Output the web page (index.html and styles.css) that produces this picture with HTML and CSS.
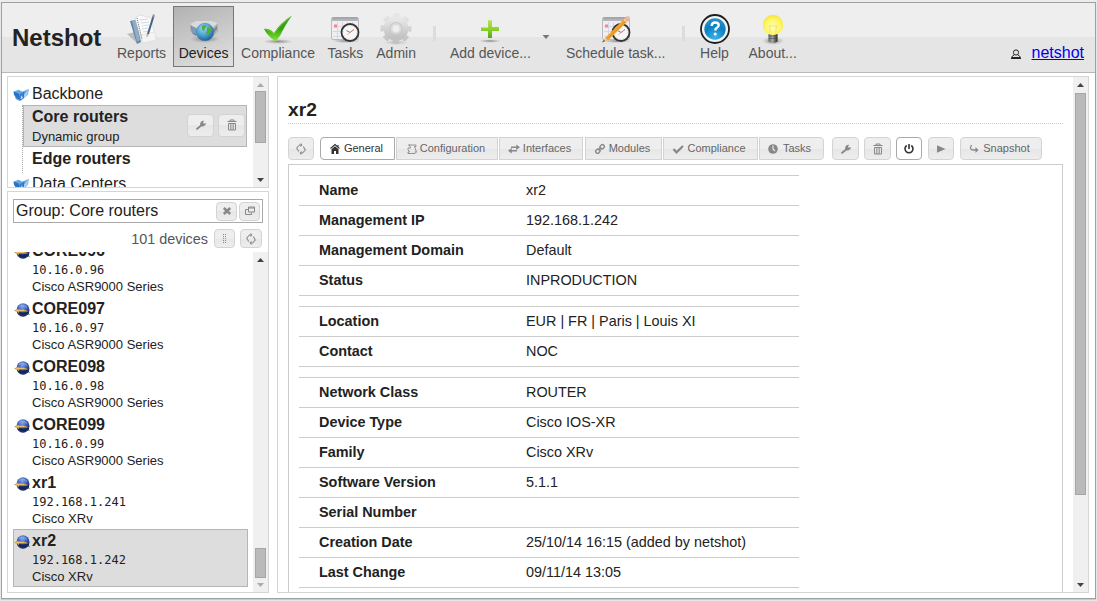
FILE: index.html
```html
<!DOCTYPE html>
<html lang="en">
<head>
<meta charset="utf-8">
<title>Netshot</title>
<link rel="stylesheet" href="styles.css">
</head>
<body>
<svg class="defs" aria-hidden="true">
  <defs>
    <linearGradient id="green" x1="0" y1="0" x2="0" y2="1"><stop offset="0" stop-color="#43b414"/><stop offset=".5" stop-color="#32a007"/><stop offset="1" stop-color="#8be83b"/></linearGradient>
    <linearGradient id="plus" x1="0" y1="0" x2="0" y2="1"><stop offset="0" stop-color="#b5e650"/><stop offset=".5" stop-color="#8fd32b"/><stop offset="1" stop-color="#54a80d"/></linearGradient>
    <linearGradient id="gear" x1="0" y1="0" x2="0" y2="1"><stop offset="0" stop-color="#e6e6e6"/><stop offset="1" stop-color="#c2c2c2"/></linearGradient>
    <radialGradient id="globe" cx=".4" cy=".3" r=".75"><stop offset="0" stop-color="#9bd8f5"/><stop offset=".55" stop-color="#459fd4"/><stop offset="1" stop-color="#17578f"/></radialGradient>
    <radialGradient id="help" cx=".5" cy=".9" r=".9"><stop offset="0" stop-color="#37b5ea"/><stop offset=".6" stop-color="#0c80c0"/><stop offset="1" stop-color="#2f8fc9"/></radialGradient>
    <radialGradient id="bulb" cx=".5" cy=".6" r=".6"><stop offset="0" stop-color="#fffbc0"/><stop offset=".6" stop-color="#fff766"/><stop offset="1" stop-color="#f4e63a"/></radialGradient>
    <radialGradient id="shade"><stop offset="0" stop-color="#555" stop-opacity=".65"/><stop offset="1" stop-color="#777" stop-opacity="0"/></radialGradient>
    <radialGradient id="ball" cx=".45" cy=".25" r=".8"><stop offset="0" stop-color="#86a9ec"/><stop offset=".5" stop-color="#3158ae"/><stop offset="1" stop-color="#101f4c"/></radialGradient>
    <linearGradient id="socket"><stop offset="0" stop-color="#666"/><stop offset=".45" stop-color="#aaa"/><stop offset="1" stop-color="#222"/></linearGradient>
    <linearGradient id="fold"><stop offset="0" stop-color="#2a72c4"/><stop offset="1" stop-color="#82bff5"/></linearGradient>

    <symbol id="calendar" viewBox="0 0 32 32">
      <ellipse cx="17" cy="28" rx="14" ry="2" fill="url(#shade)"/>
      <rect x="2.500" y="4.500" width="27" height="22" rx="1.500" fill="#eeeef3" stroke="#b9b9bf"/>
      <rect x="3" y="4" width="26" height="4" rx="1" fill="#b4b4ba"/><path d="M4 5h24" stroke="#96969d"/>
      <path d="M4 13.500h24M4 18.500h24M4 23.500h24M8.500 9v17M13.500 9v17M18.500 9v17M23.500 9v17" stroke="#d6d7e3"/>
      <path d="M5 13h3" stroke="#f28b80" stroke-width="3"/>
      <circle cx="21" cy="19.500" r="8.500" fill="#f7f7f7" stroke="#353535" stroke-width="1.800"/>
      <circle cx="21" cy="19.500" r="6.600" fill="none" stroke="#d4d4d4" stroke-dasharray="1 2.450"/>
      <path d="M17.500 17.500l3.500 2 4-3" fill="none" stroke="#777"/><path d="M18 22l6-5" stroke="#f09a90" stroke-width=".7"/>
    </symbol>
    <symbol id="folder" viewBox="0 0 18 16">
      <path d="M0 5l6-2 4 2 2-1v6l-5 5-4-2z" fill="#65a7e6"/><path d="M1 5l5 2 2 7-4-2-3-4z" fill="#2b71c4"/>
      <path d="M7 8q5-5 10-6l-1 6-8 7z" fill="url(#fold)"/><path d="M11 9l5-6-1 5-4 4z" fill="#a9d3f8"/><path d="M8 13l1-4 1.500 2.500z" fill="#e4f2fd"/><path d="M11 12V6" stroke="#2b6bb5"/>
    </symbol>
    <symbol id="router" viewBox="0 0 16 14">
      <ellipse cx="9" cy="7" rx="6.500" ry="6.700" fill="url(#ball)"/>
      <path d="M5 3.500q4-3 8 1" fill="none" stroke="#8fadea" stroke-width=".8"/><path d="M3 8.500q6 2 12 0v2l-1.500 1q-4 1-8 0z" fill="#15275a"/>
      <path d="M0 7.500L4.500 5.500v1h5q3 .5 4.500 2H5v1.500z" fill="#d99e49"/><path d="M2 7.500h8" stroke="#efc774" stroke-width=".8"/><path d="M14 10.500l1.500 1.500" stroke="#555"/>
    </symbol>
    <symbol id="wrench" viewBox="0 0 12 12"><path d="M1 9.500l4-3.300Q5 3.500 6.500 2.300q1.300-1 2.800-.5L8 3.500l.7 1.200 2.300-.6q0 2.700-2.500 3.200-1 .2-1.800-.1L2.500 10.800Q1 11 1 9.500z" fill="currentColor"/></symbol>
    <symbol id="trash" viewBox="0 0 12 12"><path d="M4 2V1h4v1M1.500 2.500h9" fill="none" stroke="currentColor"/><path d="M2.500 4.500h7V11h-7z" fill="none" stroke="currentColor"/><path d="M4.500 5v6M6 5v6M7.500 5v6" stroke="currentColor" stroke-width=".7"/></symbol>
    <symbol id="refresh" viewBox="0 0 12 12"><path d="M7 2H4.500L1.700 5l2 3.500M7 2L5.500.5M7 2L5.500 3.500M5 10h2.500l2.800-3-2-3.500M5 10l1.500-1.500M5 10l1.500 1.500" fill="none" stroke="currentColor" stroke-width="1.050"/></symbol>
    <symbol id="home" viewBox="0 0 12 12"><path d="M1.500 5.500L6 1.500l4.500 4M9 2v2" fill="none" stroke="currentColor" stroke-width="1.100"/><path d="M2.500 6.300L6 3.300l3.500 3V11H7V8H5v3H2.500z" fill="currentColor"/></symbol>
    <symbol id="script" viewBox="0 0 12 12"><path d="M3.500 2H10v1.500H8.500l2 5.500L9 10.500H2V9h1.500L2 6.500V5h2.500zM2 2h2M8.500 9H10" fill="none" stroke="currentColor" stroke-width=".9"/></symbol>
    <symbol id="swap" viewBox="0 0 12 12"><path d="M3 4.200h6M3 7.800h6" stroke="currentColor" stroke-width="1.500"/><path d="M8.300 1.500L12 4.200 8.300 7zM3.700 5L0 7.800l3.700 2.700z" fill="currentColor"/></symbol>
    <symbol id="link" viewBox="0 0 12 12"><g transform="rotate(-45 6 6)" fill="none" stroke="currentColor" stroke-width="1.400"><rect x="0.700" y="4.200" width="4.500" height="3.600" rx="1.600"/><rect x="6.800" y="4.200" width="4.500" height="3.600" rx="1.600"/><path d="M4 6h4"/></g></symbol>
    <symbol id="check" viewBox="0 0 12 12"><path d="M1.500 6l3 3.300L11 3" fill="none" stroke="currentColor" stroke-width="2.200"/></symbol>
    <symbol id="clock" viewBox="0 0 12 12"><circle cx="6" cy="6" r="4.800" fill="currentColor"/><path d="M6 2.500V6l2 2" fill="none" stroke="#eee" stroke-width="1.100"/></symbol>
    <symbol id="power" viewBox="0 0 12 12"><path d="M3.700 2.500a4 4 0 1 0 4.600 0M6 1v5" fill="none" stroke="currentColor" stroke-width="1.600"/></symbol>
    <symbol id="play" viewBox="0 0 12 12"><path d="M2 2.200l8.500 3.800L2 9.800z" fill="currentColor"/></symbol>
    <symbol id="turn" viewBox="0 0 12 12"><path d="M3.500 2Q.8 6.500 5 7h3" fill="none" stroke="currentColor" stroke-width="1.300"/><path d="M7.500 4l3 3-3 3z" fill="currentColor"/></symbol>
    <symbol id="close" viewBox="0 0 12 12"><path d="M2.800 3l6.400 6M9.200 3L2.800 9" stroke="currentColor" stroke-width="2.500"/></symbol>
    <symbol id="windows" viewBox="0 0 12 12"><path d="M4.500 2h6v5h-6zM4.500 3h6M4 4.500H1.500v5h6V7.500" fill="none" stroke="currentColor"/></symbol>
    <symbol id="grip" viewBox="0 0 12 12"><path d="M4.500 1v10M6.500 1v10" stroke="currentColor" stroke-width="1" stroke-dasharray="1 1"/></symbol>
    <symbol id="person" viewBox="0 0 12 12"><circle cx="6" cy="4.500" r="2.600" fill="none" stroke="currentColor"/><path d="M4 7Q2 8 1.500 9.500h9Q10 8 8 7" fill="none" stroke="currentColor"/><path d="M1 10.500h10" stroke="currentColor"/></symbol>
    <symbol id="up" viewBox="0 0 7 4"><path d="M0 4L3.500 0 7 4z" fill="currentColor"/></symbol>
    <symbol id="down" viewBox="0 0 7 4"><path d="M0 0h7L3.500 4z" fill="currentColor"/></symbol>
  </defs>
</svg>
<div class="window">
  <header class="toolbar">
    <h1 class="brand">Netshot</h1>
    <nav class="tools">
      <div class="tool"><svg class="art" viewBox="0 0 32 32"><path d="M1 21l8-2 5 9-3 2z" fill="#aaa" opacity=".7"/><path d="M4 8l6-1 5 22-4 2z" fill="#5c84a8"/><path d="M6 8l4-1 4 20-3 2z" fill="#94acc3"/><path d="M9 5l5-3 11 3 4 18-13 5z" fill="#fafafa" stroke="#cdd2d8" stroke-width=".6"/><path d="M14 22l15-3 1 8-13 3z" fill="#f2f4f7" stroke="#d0d4d9" stroke-width=".5"/><path d="M11 5l5 21" stroke="#69717a" stroke-dasharray="1 1"/><path d="M14 7l8-1M15 10l8-1M16 13l7-1M16 16l6-1M17 19l5-1" stroke="#c5cbd2" stroke-width=".7"/><path d="M27.500 3L22 21" stroke="#3e6688" stroke-width="2"/><path d="M28 1.500l-1 3" stroke="#b98886" stroke-width="2"/><path d="M21 20.500L20 25l3-3.500z" fill="#dca369"/></svg><span>Reports</span></div>
      <div class="tool tool-active"><svg class="art" viewBox="0 0 32 32"><ellipse cx="17" cy="26" rx="15" ry="4" fill="url(#shade)"/><path d="M2 11l6-3h16l6 2v8l-5 6-18-2-5-4z" fill="#afb1b8"/><path d="M2 11l6-3h16l6 2-6 5H7z" fill="#d9d9de"/><path d="M3 13l5 2v8l-4-3z" fill="#657a9a"/><path d="M5 14v6M7 15v6" stroke="#9cb8dc"/><path d="M25 17l4-4v3l-4 5z" fill="#84868d"/><circle cx="17" cy="19" r="8.800" fill="url(#globe)" stroke="#43789e" stroke-width=".5"/><path d="M14 13l3-1 2 1-2 2-1 3-2-1zM19 15l3-1 2 3-2 2-2 4-2-3 1-2z" fill="#58ab35"/></svg><span>Devices</span></div>
      <div class="tool"><svg class="art" viewBox="0 0 32 32"><ellipse cx="16" cy="28.500" rx="15" ry="2.500" fill="url(#shade)"/><path d="M2 16q5-1 10 4Q18 10 30 2.500 22 14 18.500 22L14 28.500Q6 24 2 16z" fill="url(#green)"/><path d="M3 16q5 1 9 5Q19 10 28 4" stroke="#88d164" stroke-width=".7" fill="none"/></svg><span>Compliance</span></div>
      <div class="tool tool-tasks"><svg class="art"><use href="#calendar"/></svg><span>Tasks</span></div>
      <div class="tool"><svg class="art" viewBox="0 0 32 32"><ellipse cx="16" cy="29.500" rx="12" ry="2.500" fill="url(#shade)" opacity=".5"/><circle cx="16" cy="15.500" r="13.500" fill="none" stroke="url(#gear)" stroke-width="4" stroke-dasharray="6.200 4.403" stroke-dashoffset="3.100"/><circle cx="16" cy="15.500" r="8.500" fill="none" stroke="url(#gear)" stroke-width="8"/><circle cx="16" cy="15.500" r="6.500" fill="#c8c8c8"/><circle cx="16" cy="15.500" r="4.500" fill="#eee" stroke="#dadada" stroke-width="2"/></svg><span>Admin</span></div>
      <i class="sep"></i>
      <div class="tool tool-add"><svg class="art" viewBox="0 0 32 32"><ellipse cx="16" cy="28" rx="11" ry="1.800" fill="url(#shade)"/><path d="M14 7h4v7h7v4h-7v7h-4v-7H7v-4h7z" fill="url(#plus)"/><path d="M14.500 7.500h3M7.500 14.500H14" stroke="#d0ed82" stroke-width=".8"/></svg><span>Add device...</span></div>
      <svg class="caret"><use href="#down"/></svg>
      <div class="tool tool-schedule"><svg class="art" viewBox="0 0 32 32"><use href="#calendar"/><path d="M5 25L25 5l3 3L8 27.500z" fill="#f6a429"/><path d="M7 26L27 7" stroke="#dc8a1c" stroke-width=".8"/><path d="M5 25l-3 4.500L8 27z" fill="#e8c59c"/><path d="M2 29.500l2-2.500 1 1z" fill="#333"/><path d="M25 5l2-2q3 0 3 3l-2 2z" fill="#f3b3aa"/><path d="M24 6l3 3" stroke="#ddd" stroke-width="1.500"/></svg><span>Schedule task...</span></div>
      <i class="sep sep-help"></i>
      <div class="tool tool-help"><svg class="art" viewBox="0 0 32 32"><circle cx="16" cy="16" r="14" fill="#f1f5f7" stroke="#202020" stroke-width="1.800"/><circle cx="16" cy="16" r="10.700" fill="url(#help)"/><path d="M12.700 13q0-3.500 3.600-3.500 3.400 0 3.400 2.700 0 1.800-1.900 2.700-1.500.8-1.500 2.600" fill="none" stroke="#fff" stroke-width="2.400"/><circle cx="16.200" cy="21" r="1.500" fill="#fff"/></svg><span>Help</span></div>
      <div class="tool tool-about"><svg class="art" viewBox="0 0 32 32"><ellipse cx="16" cy="28" rx="11" ry="4" fill="url(#shade)"/><path d="M11.500 20h9v8.500q-4.500 3-9 0z" fill="url(#socket)"/><path d="M11.500 23h9M11.500 25.500h9" stroke="#555" stroke-width=".7"/><circle cx="16" cy="12" r="10.200" fill="url(#bulb)"/><path d="M13 20v-5l-1-2h8l-1 2v5" fill="none" stroke="#e5d964" stroke-width=".7"/></svg><span>About...</span></div>
    </nav>
    <div class="account"><svg class="icon"><use href="#person"/></svg><a href="#">netshot</a></div>
  </header>
  <main class="body">
    <aside class="side">
      <section class="panel groups">
        <div class="group-list">
          <div class="folder"><svg class="folder-icon"><use href="#folder"/></svg>Backbone</div>
          <div class="children">
            <div class="group group-active"><div><b>Core routers</b><small>Dynamic group</small></div><span class="btn"><svg class="icon"><use href="#wrench"/></svg></span><span class="btn"><svg class="icon"><use href="#trash"/></svg></span></div>
            <div class="group"><b>Edge routers</b></div>
          </div>
          <div class="folder"><svg class="folder-icon"><use href="#folder"/></svg>Data Centers</div>
        </div>
        <div class="scroll"><svg class="arrow dim"><use href="#up"/></svg><i class="thumb thumb-groups"></i><svg class="arrow last"><use href="#down"/></svg></div>
      </section>
      <section class="panel devices">
        <div class="search"><span>Group: Core routers</span><span class="btn"><svg class="icon"><use href="#close"/></svg></span><span class="btn"><svg class="icon"><use href="#windows"/></svg></span></div>
        <div class="count"><span>101 devices</span><span class="btn"><svg class="icon"><use href="#grip"/></svg></span><span class="btn btn-reload"><svg class="icon"><use href="#refresh"/></svg></span></div>
        <div class="device-area">
          <div class="device-list">
            <div class="device"><svg class="router"><use href="#router"/></svg><b>CORE096</b><code>10.16.0.96</code><small>Cisco ASR9000 Series</small></div>
            <div class="device"><svg class="router"><use href="#router"/></svg><b>CORE097</b><code>10.16.0.97</code><small>Cisco ASR9000 Series</small></div>
            <div class="device"><svg class="router"><use href="#router"/></svg><b>CORE098</b><code>10.16.0.98</code><small>Cisco ASR9000 Series</small></div>
            <div class="device"><svg class="router"><use href="#router"/></svg><b>CORE099</b><code>10.16.0.99</code><small>Cisco ASR9000 Series</small></div>
            <div class="device"><svg class="router"><use href="#router"/></svg><b>xr1</b><code>192.168.1.241</code><small>Cisco XRv</small></div>
            <div class="device device-active"><svg class="router"><use href="#router"/></svg><b>xr2</b><code>192.168.1.242</code><small>Cisco XRv</small></div>
          </div>
          <div class="scroll"><svg class="arrow"><use href="#up"/></svg><i class="thumb thumb-devices"></i><svg class="arrow dim last"><use href="#down"/></svg></div>
        </div>
      </section>
    </aside>
    <section class="panel detail">
      <div class="detail-content">
        <h2 class="title">xr2</h2>
        <div class="tabs">
          <span class="btn"><svg class="icon"><use href="#refresh"/></svg></span>
          <div class="tabset">
            <span class="btn tab on t-general"><svg class="icon"><use href="#home"/></svg>General</span>
            <span class="btn tab t-config"><svg class="icon"><use href="#script"/></svg>Configuration</span>
            <span class="btn tab t-inter"><svg class="icon"><use href="#swap"/></svg>Interfaces</span>
            <span class="btn tab t-modules"><svg class="icon"><use href="#link"/></svg>Modules</span>
            <span class="btn tab t-comp"><svg class="icon"><use href="#check"/></svg>Compliance</span>
            <span class="btn tab t-tasks"><svg class="icon"><use href="#clock"/></svg>Tasks</span>
          </div>
          <div class="actions">
            <span class="btn"><svg class="icon"><use href="#wrench"/></svg></span>
            <span class="btn"><svg class="icon"><use href="#trash"/></svg></span>
            <span class="btn on"><svg class="icon"><use href="#power"/></svg></span>
            <span class="btn"><svg class="icon"><use href="#play"/></svg></span>
            <span class="btn tab t-snap"><svg class="icon"><use href="#turn"/></svg>Snapshot</span>
          </div>
        </div>
        <div class="sheet">
          <dl class="props">
            <div><dt>Name</dt><dd>xr2</dd></div>
            <div><dt>Management IP</dt><dd>192.168.1.242</dd></div>
            <div><dt>Management Domain</dt><dd>Default</dd></div>
            <div><dt>Status</dt><dd>INPRODUCTION</dd></div>
          </dl>
          <dl class="props">
            <div><dt>Location</dt><dd>EUR | FR | Paris | Louis XI</dd></div>
            <div><dt>Contact</dt><dd>NOC</dd></div>
          </dl>
          <dl class="props">
            <div><dt>Network Class</dt><dd>ROUTER</dd></div>
            <div><dt>Device Type</dt><dd>Cisco IOS-XR</dd></div>
            <div><dt>Family</dt><dd>Cisco XRv</dd></div>
            <div><dt>Software Version</dt><dd>5.1.1</dd></div>
            <div><dt>Serial Number</dt><dd></dd></div>
            <div><dt>Creation Date</dt><dd>25/10/14 16:15 (added by netshot)</dd></div>
            <div><dt>Last Change</dt><dd>09/11/14 13:05</dd></div>
          </dl>
        </div>
      </div>
      <div class="scroll"><svg class="arrow"><use href="#up"/></svg><i class="thumb thumb-detail"></i><svg class="arrow last"><use href="#down"/></svg></div>
    </section>
  </main>
</div>
</body>
</html>
```
FILE: styles.css
```css
* { box-sizing: border-box; }
body {
  margin: 0;
  height: 601px;
  padding: 2px 1px;
  overflow: hidden;
  background: #ececec;
  color: #222;
  font: 16px/20px "Liberation Sans", Arial, sans-serif;
}
svg { display: block; flex: none; }
small { font-size: 13px; }
.defs { width: 0; height: 0; position: absolute; }
.window {
  display: flex;
  flex-direction: column;
  width: 1095px;
  height: 597px;
  border: 1px solid #a0a0a3;
  background: #fff;
  box-shadow: 0 1px 1px #ccc;
}

/* Main toolbar */
.toolbar {
  display: flex;
  flex: none;
  height: 70px;
  border-bottom: 1px solid #b8b8b8;
  background: linear-gradient(#eee 34px, #e5e5e5 34px);
}
.brand { width: 99px; margin: 21px 0 0 10px; font-size: 24px; line-height: 28px; }
.tools { display: flex; gap: 1px; padding-top: 3px; font-size: 14px; line-height: 16px; color: #555; }
.tool {
  display: flex;
  flex-direction: column;
  align-items: center;
  height: 61px;
  padding: 6px 5px 0;
  border: 1px solid transparent;
  white-space: nowrap;
}
.tool-active { width: 61px; border-color: #777; color: #222; background: linear-gradient(160deg, #b2b2b2, #e2e2e2); }
.tool-tasks { margin-left: -0.5px; }
.art { width: 32px; height: 32px; }
.sep { width: 3px; height: 15px; margin: 20px 0 0 10px; background: #dcdcdc; }
.tool-add { margin-left: 7px; }
.caret { width: 8px; height: 4px; margin: 29px 0 0 4px; color: #777; }
.tool-schedule { margin-left: 9px; }
.sep-help { margin-left: 9px; }
.tool-help { margin-left: 7px; }
.tool-about { margin-left: 5px; }
.account { display: flex; gap: 10px; align-items: center; height: 20px; margin: 40px 11px 0 auto; }
.account a { color: #0000ee; }
.account .icon { margin-top: 1px; }

.body { display: flex; flex: 1; gap: 8px; min-height: 0; padding: 3px 6px 5px 5px; }
.side { display: flex; flex-direction: column; gap: 3px; width: 262px; }
.panel { border: 1px solid #d5d5d5; background: #fff; overflow: hidden; }

/* Buttons */
.btn {
  display: flex;
  align-items: center;
  justify-content: center;
  flex: none;
  border: 1px solid #d3d3d3;
  border-radius: 4px;
  color: #888;
  background: linear-gradient(#eee 50%, #e6e6e6 50%, #ededed);
}
.icon { width: 12px; height: 12px; }

/* Scrollbars */
.scroll { display: flex; flex-direction: column; align-items: center; flex: none; width: 15px; background: #f0f0f0; color: #444; }
.arrow { width: 7px; height: 4px; margin-top: 6px; }
.arrow.dim { color: #aaa; }
.arrow.last { margin: auto 0 5px; }
.thumb { width: 11px; border: 1px solid #a6a6a6; background: #bababa; }
.thumb-groups { height: 52px; margin-top: 4px; }
.thumb-devices { height: 30px; margin-top: 286px; }
.thumb-detail { height: 402px; margin-top: 6px; }

/* Group tree */
.groups { display: flex; flex: none; height: 112px; }
.group-list { flex: 1; padding: 6px 6px 0 5px; overflow: hidden; }
.folder { display: flex; align-items: center; height: 22px; gap: 2px; }
.folder-icon { width: 17px; height: 15px; }
.children { margin-left: 9px; height: 68px; border-left: 1px dotted #aaa; }
.group { display: flex; align-items: center; height: 24px; padding-left: 9px; }
.group b, .group small { display: block; line-height: 20px; }
.group-active { height: 42px; padding: 0 1px 0 8px; gap: 4px; border: 1px solid #b5b5b5; background: #ddd; }
.group-active > div { flex: 1; padding-top: 2px; }
.group .btn { width: 27px; height: 23px; margin-top: -2px; }

/* Device search and list */
.devices { display: flex; flex-direction: column; flex: 1; min-height: 0; }
.search { display: flex; align-items: center; flex: none; gap: 2px; height: 24px; margin: 7px 5px 0; padding: 0 2px; border: 1px solid #aaa; }
.search span:first-child { flex: 1; margin-top: -1px; }
.devices .btn { width: 21px; height: 19px; }
.devices .btn-reload { width: 22px; }
.count { display: flex; align-items: center; justify-content: flex-end; flex: none; gap: 5px; height: 29px; margin-right: 6px; padding-top: 2px; font-size: 14.400px; color: #555; }
.count span:first-child { margin-right: 1px; }
.device-area { display: flex; flex: 1; min-height: 0; }
.device-list { display: flex; flex: 1; flex-direction: column; justify-content: flex-end; padding: 0 5px 5px; overflow: hidden; }
.device {
  display: grid;
  grid-template: 22px 17px 17px / 18px 1fr;
  flex: none;
  height: 58px;
  border: 1px solid transparent;
}
.device-active { background: #ddd; border-color: #b5b5b5; }
.router { width: 16px; height: 14px; margin: 5px 0 0; }
.device b { line-height: 22px; }
.device code, .device small { grid-column: 2; line-height: 17px; }
.device small { margin-top: -1px; }
.device code { font: 12px/17px "DejaVu Sans Mono", monospace; }

/* Device detail */
.detail { display: flex; flex: 1; }
.detail-content { display: flex; flex-direction: column; flex: 1; padding: 19px 10px 0; }
.title { flex: none; height: 28px; margin: 0; font-size: 19.200px; line-height: 28px; border-bottom: 1px dotted #ccc; }
.tabs { display: flex; flex: none; height: 23px; margin-top: 13px; font-size: 11px; }
.tabs .btn { width: 26px; height: 23px; }
.tabset { display: flex; gap: 1px; margin-left: 6px; }
.tabset .btn { border-radius: 0; }
.tabs .tab { gap: 3px; padding-right: 3px; color: #666; line-height: 13px; }
.tabs .tab .icon { color: #888; }
.tabs .on { border-color: #aaa; background: #fff; color: #333; }
.tabs .on .icon { color: #333; }
.tabset .t-general { width: 75px; border-radius: 4px 0 0 4px; }
.tabset .t-config { width: 102px; gap: 2px; }
.tabset .t-inter { width: 84px; gap: 3px; margin-right: 1px; }
.tabset .t-modules { width: 77px; }
.tabset .t-comp { width: 95px; }
.tabset .t-tasks { width: 65px; gap: 4px; padding-right: 5px; border-radius: 0 4px 4px 0; }
.actions { display: flex; gap: 6px; margin-left: 8px; }
.tabs .actions .btn:nth-child(-n+2) { width: 27px; }
.tabs .actions .btn:nth-child(2),
.tabs .actions .btn:nth-child(3) { margin-left: -1px; }
.tabs .actions .t-snap { width: 82px; padding-right: 4px; }
.sheet { display: flex; flex: 1; flex-direction: column; gap: 10px; margin-top: 4px; padding: 10px; border: 1px solid #ccc; border-bottom: 0; font-size: 14.400px; overflow: hidden; }
.props { flex: none; width: 500px; margin: 0; border-top: 1px solid #ccc; }
.props > div { display: flex; align-items: center; height: 30px; padding: 0 0 1px 20px; border-bottom: 1px solid #ccc; }
.props dt { width: 207px; font-weight: bold; }
.props dd { margin: 0; }
```
